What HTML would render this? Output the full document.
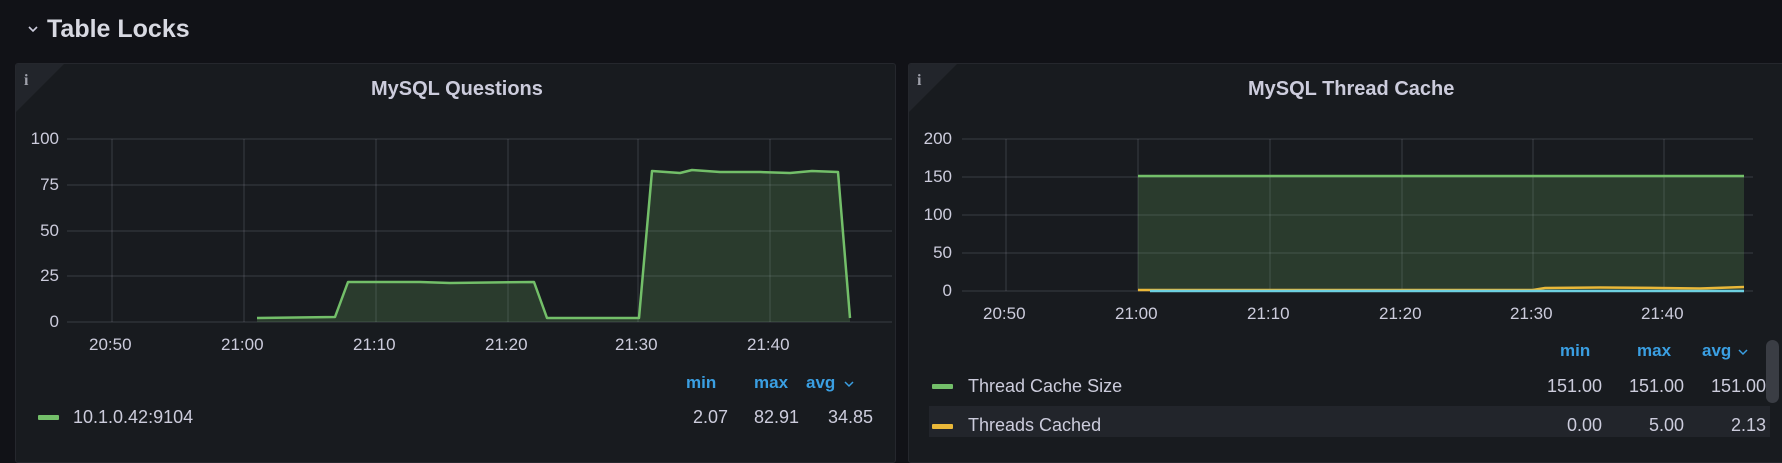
<!DOCTYPE html>
<html><head><meta charset="utf-8"><style>
*{margin:0;padding:0;box-sizing:border-box}
body{width:1782px;height:448px;background:#111217;overflow:hidden;font-family:"Liberation Sans",sans-serif;color:#ccccdc;position:relative}
.abs{position:absolute;white-space:nowrap}
.panel{position:absolute;top:63px;height:400px;background:#181b1f;border:1px solid #25272d;border-radius:3px;overflow:hidden}
.tri{position:absolute;left:0;top:0;width:0;height:0;border-top:48px solid #22252b;border-right:48px solid transparent}
.ii{position:absolute;left:8px;top:8px;font:bold 16px "Liberation Serif",serif;color:#9fa1ab}
.title{font-size:20px;font-weight:bold;color:#ccccdc}
.ax{font-size:17px;color:#ccccdc}
.hd{font-size:17px;font-weight:bold;color:#3a9fe2}
.lg{font-size:18px;color:#ccccdc}
</style></head><body>
<svg class="abs" style="left:27px;top:24px" width="12" height="10"><path d="M2 3 L6 7 L10 3" stroke="#ccccdc" stroke-width="1.6" fill="none"/></svg>
<div class="abs" style="left:47px;top:15px;font-size:25px;font-weight:bold;color:#d8d9e2">Table Locks</div>

<div class="panel" style="left:15px;width:881px"><div class="tri"></div><div class="ii">i</div></div>
<div class="panel" style="left:908px;width:880px"><div class="tri"></div><div class="ii">i</div></div>

<div class="abs title" style="left:371px;top:78px">MySQL Questions</div>
<div class="abs title" style="left:1248px;top:78px">MySQL Thread Cache</div>

<svg class="abs" style="left:0;top:0" width="1782" height="448">
<g stroke="rgba(204,204,220,0.13)" stroke-width="1.5">
<line x1="67" y1="139" x2="892" y2="139"/><line x1="67" y1="185" x2="892" y2="185"/><line x1="67" y1="231" x2="892" y2="231"/><line x1="67" y1="276" x2="892" y2="276"/><line x1="67" y1="322" x2="892" y2="322"/>
<line x1="112" y1="139" x2="112" y2="322"/><line x1="244" y1="139" x2="244" y2="322"/><line x1="376" y1="139" x2="376" y2="322"/><line x1="508" y1="139" x2="508" y2="322"/><line x1="638" y1="139" x2="638" y2="322"/><line x1="770" y1="139" x2="770" y2="322"/>
<line x1="962" y1="139" x2="1753" y2="139"/><line x1="962" y1="177" x2="1753" y2="177"/><line x1="962" y1="215" x2="1753" y2="215"/><line x1="962" y1="253" x2="1753" y2="253"/><line x1="962" y1="291" x2="1753" y2="291"/>
<line x1="1006" y1="139" x2="1006" y2="291"/><line x1="1138" y1="139" x2="1138" y2="291"/><line x1="1270" y1="139" x2="1270" y2="291"/><line x1="1402" y1="139" x2="1402" y2="291"/><line x1="1533" y1="139" x2="1533" y2="291"/><line x1="1664" y1="139" x2="1664" y2="291"/>
</g>
<path d="M257 318 L335 317 L348 282 L420 282 L450 283 L534 282 L547 318 L580 318 L639 318 L652 171 L680 173 L692 170 L720 172 L760 172 L790 173 L812 171 L838 172 L850 318 L850 322 L257 322Z" fill="rgba(115,191,105,0.2)"/>
<path d="M257 318 L335 317 L348 282 L420 282 L450 283 L534 282 L547 318 L580 318 L639 318 L652 171 L680 173 L692 170 L720 172 L760 172 L790 173 L812 171 L838 172 L850 318" fill="none" stroke="#73bf69" stroke-width="2.5" stroke-linejoin="round"/>
<rect x="1138" y="176" width="606" height="115" fill="rgba(115,191,105,0.2)"/>
<line x1="1138" y1="176" x2="1744" y2="176" stroke="#73bf69" stroke-width="2.5"/>
<path d="M1138 290 L1533 290 L1545 288 L1600 287.5 L1660 288 L1700 288.5 L1744 287" fill="none" stroke="#eab839" stroke-width="2.5"/>
<line x1="1150" y1="291" x2="1744" y2="291" stroke="#6ed0e0" stroke-width="2.5"/>
</svg>

<div class="abs ax" style="right:1723px;top:129px">100</div>
<div class="abs ax" style="right:1723px;top:175px">75</div>
<div class="abs ax" style="right:1723px;top:221px">50</div>
<div class="abs ax" style="right:1723px;top:266px">25</div>
<div class="abs ax" style="right:1723px;top:312px">0</div>
<div class="abs ax" style="left:89px;top:335px">20:50</div>
<div class="abs ax" style="left:221px;top:335px">21:00</div>
<div class="abs ax" style="left:353px;top:335px">21:10</div>
<div class="abs ax" style="left:485px;top:335px">21:20</div>
<div class="abs ax" style="left:615px;top:335px">21:30</div>
<div class="abs ax" style="left:747px;top:335px">21:40</div>

<div class="abs ax" style="right:830px;top:129px">200</div>
<div class="abs ax" style="right:830px;top:167px">150</div>
<div class="abs ax" style="right:830px;top:205px">100</div>
<div class="abs ax" style="right:830px;top:243px">50</div>
<div class="abs ax" style="right:830px;top:281px">0</div>
<div class="abs ax" style="left:983px;top:304px">20:50</div>
<div class="abs ax" style="left:1115px;top:304px">21:00</div>
<div class="abs ax" style="left:1247px;top:304px">21:10</div>
<div class="abs ax" style="left:1379px;top:304px">21:20</div>
<div class="abs ax" style="left:1510px;top:304px">21:30</div>
<div class="abs ax" style="left:1641px;top:304px">21:40</div>

<div class="abs hd" style="left:686px;top:373px">min</div>
<div class="abs hd" style="left:754px;top:373px">max</div>
<div class="abs hd" style="left:806px;top:373px">avg</div>
<svg class="abs" style="left:843px;top:379px" width="12" height="10"><path d="M2 3 L6 7 L10 3" stroke="#3a9fe2" stroke-width="1.5" fill="none"/></svg>
<div class="abs" style="left:38px;top:415px;width:21px;height:5px;background:#73bf69;border-radius:1px"></div>
<div class="abs lg" style="left:73px;top:407px">10.1.0.42:9104</div>
<div class="abs lg" style="right:1054px;top:407px">2.07</div>
<div class="abs lg" style="right:983px;top:407px">82.91</div>
<div class="abs lg" style="right:909px;top:407px">34.85</div>

<div class="abs hd" style="left:1560px;top:341px">min</div>
<div class="abs hd" style="left:1637px;top:341px">max</div>
<div class="abs hd" style="left:1702px;top:341px">avg</div>
<svg class="abs" style="left:1737px;top:347px" width="12" height="10"><path d="M2 3 L6 7 L10 3" stroke="#3a9fe2" stroke-width="1.5" fill="none"/></svg>
<div class="abs" style="left:929px;top:406px;width:841px;height:31px;background:#22252b"></div>
<div class="abs" style="left:932px;top:384px;width:21px;height:5px;background:#73bf69;border-radius:1px"></div>
<div class="abs lg" style="left:968px;top:376px">Thread Cache Size</div>
<div class="abs lg" style="right:180px;top:376px">151.00</div>
<div class="abs lg" style="right:98px;top:376px">151.00</div>
<div class="abs lg" style="right:16px;top:376px">151.00</div>
<div class="abs" style="left:932px;top:424px;width:21px;height:5px;background:#eab839;border-radius:1px"></div>
<div class="abs lg" style="left:968px;top:415px">Threads Cached</div>
<div class="abs lg" style="right:180px;top:415px">0.00</div>
<div class="abs lg" style="right:98px;top:415px">5.00</div>
<div class="abs lg" style="right:16px;top:415px">2.13</div>
<div class="abs" style="left:1766px;top:340px;width:13px;height:63px;background:#3a3d44;border-radius:7px"></div>
</body></html>
